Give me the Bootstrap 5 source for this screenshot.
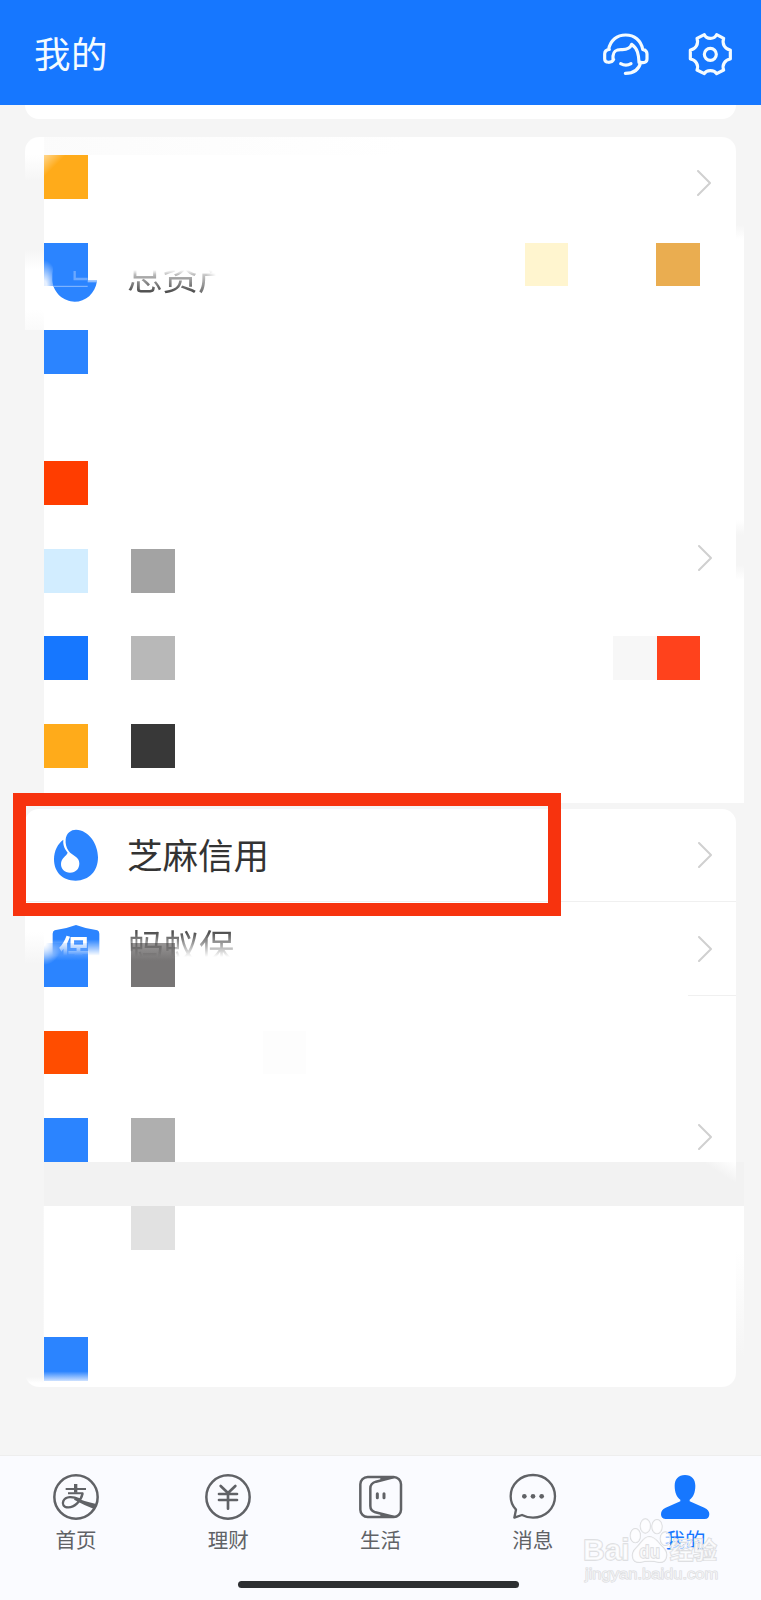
<!DOCTYPE html>
<html lang="zh-CN">
<head>
<meta charset="utf-8">
<meta name="viewport" content="width=device-width, initial-scale=1">
<title>我的</title>
<link href="https://cdn.jsdelivr.net/npm/bootstrap@5.3.0/dist/css/bootstrap.min.css" rel="stylesheet">
<style>
:root{--u:43.75px;--page:#f5f5f5;--blue:#2b84ff}
body{font-family:"Liberation Sans","Noto Sans CJK SC",sans-serif;background:var(--page);color:#333;width:761px;height:1600px;overflow:hidden}
svg{display:block;flex:none}
.topbar{height:105px;background:#1677ff;padding:4px 25px 0 34px;color:#f4fbff}
.topbar h1{font-size:36.5px;font-weight:400;line-height:52px;margin:2px 0 0;letter-spacing:.5px}
.topbar .tools{gap:35px}
.line{fill:none;stroke:currentColor;stroke-linecap:round;stroke-linejoin:round}
.peek{height:14px;margin:0 25px;background:#fff;border-radius:0 0 14px 14px}
.band{position:relative;background-color:#fff;background-repeat:no-repeat}
.band-a{height:88px;margin:18px 25px 0;border-radius:14px 14px 0 0;padding:18px 25px 0 18.75px;
 background-image:linear-gradient(#fff 18px,var(--page) 44px),linear-gradient(90deg,#fbfbfb,#fff 380px);background-size:19px 100%,100% 18px}
.band-b{height:105px;margin:0 17.25px 0 25px;padding:17.5px 43.75px 0 18.75px;
 background-image:linear-gradient(var(--page) 25px,#fff 45px 85px,#fafafa);background-size:19px 100%}
.band-b::after{content:"";position:absolute;right:0;top:0;width:8px;height:14px;background:linear-gradient(var(--page),#fff)}
.band-c{height:473px;margin:0 17.25px 0 43.75px;padding-right:32.5px}
.notch{position:absolute;right:0;top:190px;width:8px;height:60px;background:linear-gradient(transparent,var(--page) 15px 45px,transparent)}
.px{width:var(--u);height:var(--u);flex:none;background:var(--c)}
.mrow{height:var(--u);margin-bottom:var(--u)}
.chev{width:14px;height:26px;color:#d0d0d0}
.label{font-size:35.5px;line-height:50px;white-space:nowrap}
.ghost{position:absolute}
.shade-up{-webkit-mask-image:linear-gradient(transparent 34%,rgba(0,0,0,.35) 44%,rgba(0,0,0,.9) 80%);mask-image:linear-gradient(transparent 34%,rgba(0,0,0,.35) 44%,rgba(0,0,0,.9) 80%)}
.fade-end{-webkit-mask-image:linear-gradient(90deg,rgba(0,0,0,.8) 8px,transparent 18px);mask-image:linear-gradient(90deg,rgba(0,0,0,.8) 8px,transparent 18px);display:inline-block}
.shade-down{-webkit-mask-image:linear-gradient(rgba(0,0,0,.85) 20%,transparent 68%);mask-image:linear-gradient(rgba(0,0,0,.85) 20%,transparent 68%)}
.icon-down{-webkit-mask-image:linear-gradient(#000 30%,transparent 64%);mask-image:linear-gradient(#000 30%,transparent 64%)}
.band-d{z-index:2;height:93px;margin:6px 25.5px 0 25px;border-radius:14px 14px 0 0;padding:0 24px 0 26px;border-bottom:1px solid #f0f0f0}
.band-e{height:260px;margin:0 25.5px 0 25px;padding:41px 24px 0 18.75px;background-image:linear-gradient(#fff 30px,var(--page) 62px);background-size:19px 100%}
.rule{position:absolute;right:0;top:93px;width:48px;height:1px;background:#f0f0f0}
.frame{position:absolute;left:-12px;top:-16px;width:548px;height:123px;border:13.5px solid #f7330e}
.gapbar{height:44px;margin:0 17.25px 0 43.75px;background:#f2f2f2}
.gapbar i{display:block;margin-left:auto;margin-right:8px;width:30px;height:20px;background:linear-gradient(to top right,#f2f2f2 45%,#fff)}
.band-f{height:181px;margin:0 25.5px 0 25px;border-radius:0 0 14px 14px;padding:0 18.75px;background-image:linear-gradient(var(--page) 171px,#fff 177px);background-size:18.75px 100%}
.side{position:absolute;left:100%;top:0;width:8px;height:150px;background:linear-gradient(#fff 30%,var(--page))}
.tabs{height:145px;margin-top:68px;background:#fafbff;border-top:1px solid #eee;color:#606266;position:relative}
.tabs a{color:inherit;text-decoration:none;font-size:20.5px;line-height:30px;padding-top:16px}
.tabs a.active{color:#1677ff}
.tabs svg{margin-bottom:4px}
.homebar{position:absolute;left:237.5px;bottom:12px;width:281px;height:7px;border-radius:4px;background:#2d2f32}
.wm{position:absolute;left:581px;top:61px;pointer-events:none}
</style>
</head>
<body class="d-flex flex-column">
<header class="topbar d-flex align-items-center justify-content-between">
  <h1>我的</h1>
  <div class="tools d-flex">
    <svg width="50" height="50" viewBox="660 90 150 150"><g class="line" stroke-width="9.5"><path d="M683 148C688 121 708 105 734 105S780 121 785 148M698 178C692 190 671 190 671 177V162C671 153 676 149 685 148M696 181V168C698 150 709 148 724 149C739 149 748 144 752 133C770 145 773 164 774 187M785 148C794 150 798 154 798 162V176C798 187 790 189 779 187C774 208 758 220 733 220M719 191Q735 200 750 191"/></g></svg>
    <svg width="50" height="50" viewBox="915 90 150 150"><g class="line" stroke-width="9.5"><path d="M970 104C976 119 1000 119 1007 104L1028 115C1022 132 1032 148 1048 150V177C1032 179 1022 195 1028 210L1007 221C1000 209 976 209 970 221L948 210C954 195 944 179 928 177V150C944 148 954 132 948 115Z"/><circle cx="988" cy="163" r="18"/></g></svg>
  </div>
</header>
<main>
  <div class="peek"></div>

  <section class="band band-a d-flex justify-content-between align-items-start">
    <div class="px" style="--c:linear-gradient(135deg,#ffd78f,#ffab1a 25%)"></div>
    <svg class="chev" style="margin-top:15px" viewBox="0 0 14 26"><path class="line" stroke-width="2" d="M1 1L13 13L1 25"/></svg>
  </section>
  <section class="band band-b d-flex align-items-start">
    <div class="px" style="--c:radial-gradient(ellipse 14px 26px at 0 100%,#e6f0ff 20%,#2b84ff)"></div>
    <svg class="ghost" style="left:24px;top:32px" width="50" height="48" viewBox="145 770 150 144"><path fill="#2b84ff" d="M158 800Q154 822 155 840C158 880 190 904 222 904S284 880 289 841H261V800Z"/><path stroke="#6ba8ff" stroke-width="7" fill="none" d="M222 812V836H261"/><path stroke="#8fbdff" stroke-width="3" d="M158 858H261"/><path stroke="#8fbdff" stroke-width="6" d="M261 843H289"/></svg>
    <span class="label ghost shade-up" style="left:102px;top:28px">总资<span class="fade-end">产</span></span>
    <div class="px ms-auto" style="--c:#fff5cf"></div>
    <div class="px" style="--c:#eaad50;margin-left:88px"></div>
  </section>
  <section class="band band-c">
    <i class="notch"></i>
    <div class="mrow d-flex" style="margin-bottom:87.5px"><div class="px" style="--c:#2b84ff"></div></div>
    <div class="mrow d-flex"><div class="px" style="--c:#ff3d00"></div></div>
    <div class="mrow d-flex"><div class="px" style="--c:#d2edff"></div><div class="px" style="--c:#a3a3a3;margin-left:43.75px"></div>
      <svg class="chev ms-auto" style="margin-top:-4px;margin-right:-.5px" viewBox="0 0 14 26"><path class="line" stroke-width="2" d="M1 1L13 13L1 25"/></svg></div>
    <div class="mrow d-flex"><div class="px" style="--c:#1677ff"></div><div class="px" style="--c:#b8b8b8;margin-left:43.75px"></div>
      <div class="px ms-auto" style="--c:#f7f7f7"></div><div class="px" style="--c:#ff421c;margin-right:11px"></div></div>
    <div class="mrow d-flex"><div class="px" style="--c:#ffab1a"></div><div class="px" style="--c:#383838;margin-left:43.75px"></div></div>
  </section>

  <section class="band band-d d-flex align-items-center">
    <svg width="50" height="54" viewBox="153 175 150 162"><path fill="#2b84ff" d="M228 180C267 181 294 224 294 263C294 304 268 333 227 333C187 333 162 307 162 269C162 243 174 221 190 210C188 228 196 240 203 249C199 260 183 264 183 283C183 299 194 309 210 309C228 309 238 298 238 281C238 261 217 259 206 244C198 233 196 222 197 209C199 190 213 180 228 180Z"/></svg>
    <span class="label" style="margin-left:26px;padding-top:4px">芝麻信用</span>
    <svg class="chev ms-auto" viewBox="0 0 14 26"><path class="line" stroke-width="2" d="M1 1L13 13L1 25"/></svg>
    <div class="frame"></div>
  </section>
  <section class="band band-e">
    <i class="rule"></i>
    <div class="mrow d-flex"><div class="px" style="--c:radial-gradient(ellipse 18px 22px at 0 0,#fff 10%,transparent),linear-gradient(#8fbdff,#2b84ff 40%)"></div><div class="px" style="--c:linear-gradient(#979595,#777575 40%);margin-left:43.75px"></div>
      <svg class="chev ms-auto" style="margin-top:-7px" viewBox="0 0 14 26"><path class="line" stroke-width="2" d="M1 1L13 13L1 25"/></svg></div>
    <div class="ghost icon-down" style="left:27px;top:23px"><svg width="48" height="48" viewBox="156 464 144 144"><path fill="#2b84ff" d="M228 464Q260 476 292 480Q298 482 298 490V560Q290 590 228 608Q166 590 158 560V490Q158 482 164 480Q196 476 228 464Z"/><text x="176" y="574" font-size="92" font-weight="700" fill="#fff">保</text></svg></div>
    <span class="label ghost shade-down" style="left:103px;top:21px">蚂蚁保</span>
    <div class="mrow d-flex"><div class="px" style="--c:#ff4d00"></div><div class="px" style="--c:#fdfdfd;margin-left:175px"></div></div>
    <div class="mrow d-flex mb-0"><div class="px" style="--c:#2b84ff"></div><div class="px" style="--c:#afafaf;margin-left:43.75px"></div>
      <svg class="chev ms-auto" style="margin-top:6px" viewBox="0 0 14 26"><path class="line" stroke-width="2" d="M1 1L13 13L1 25"/></svg></div>
  </section>
  <div class="gapbar"><i></i></div>
  <section class="band band-f">
    <i class="side"></i>
    <div class="mrow" style="margin-bottom:87.5px"><div class="px" style="--c:#e1e1e1;margin-left:87.5px"></div></div>
    <div class="px" style="--c:linear-gradient(#2b84ff 78%,#cfe2ff)"></div>
  </section>
</main>

<nav class="tabs">
  <div class="d-flex">
    <a class="d-flex flex-column align-items-center flex-fill w-25" href="#"><svg width="50" height="50" viewBox="153 96 150 150"><circle class="line" cx="228" cy="171" r="65" stroke-width="7.5"/><g class="line" style="stroke-linecap:butt"><path stroke-width="10" d="M227 132V158"/><path stroke-width="6" d="M197 147H258M204 160H250"/><path stroke-width="7" d="M248 160C243 184 223 202 205 202C190 202 186 192 190 183C197 168 218 169 238 178"/></g><path fill="currentColor" d="M226 172Q250 184 289 192L284 208Q252 195 222 179Z"/></svg>首页</a>
    <a class="d-flex flex-column align-items-center flex-fill w-25" href="#"><svg width="50" height="50" viewBox="610 96 150 150"><circle class="line" cx="685" cy="171" r="65" stroke-width="7.5"/><path class="line" stroke-width="8" d="M663 138L685 159L707 138M658 162H712M658 180H712M685 160V206"/></svg>理财</a>
    <a class="d-flex flex-column align-items-center flex-fill w-25" href="#"><svg width="50" height="50" viewBox="1068 96 150 150"><rect class="line" x="1081" y="111" width="122" height="120" rx="22" stroke-width="7.5"/><path class="line" stroke-width="7.5" d="M1180 112L1128 125Q1111 130 1111 145V198Q1111 212 1126 217L1180 230"/><path fill="currentColor" d="M1140 109H1185L1142 122ZM1140 233H1185L1142 220Z"/><path class="line" stroke-width="9" d="M1132 161V173M1152 161V173"/></svg>生活</a>
    <a class="d-flex flex-column align-items-center flex-fill w-25" href="#"><svg width="50" height="50" viewBox="382 96 150 150"><path class="line" stroke-width="7" d="M406 209C395 198 390 185 390 169C390 132 420 105 457 105S523 132 523 169S493 233 457 233Q440 233 424 225L401 233Z"/><g fill="currentColor"><circle cx="431" cy="169" r="7"/><circle cx="457" cy="169" r="7"/><circle cx="483" cy="169" r="7"/></g></svg>消息</a>
    <a class="d-flex flex-column align-items-center flex-fill w-25 active" href="#"><svg width="50" height="50" viewBox="837 96 150 150"><path fill="currentColor" d="M912 105C932 105 943 118 943 137C943 158 936 172 926 179V184L970 203C980 208 985 214 985 222C985 231 980 237 971 237H853C844 237 840 231 840 223C840 214 844 208 854 203L898 184V179C888 172 881 158 881 137C881 118 892 105 912 105Z"/></svg>我的</a>
  </div>
  <div class="homebar"></div>
  <svg class="wm" width="142" height="68" viewBox="600 230 426 204" font-family="Liberation Sans, Noto Sans CJK SC, sans-serif"><g fill="#fff" fill-opacity=".6" stroke="#d9dadd" stroke-width="4" paint-order="stroke"><ellipse cx="763" cy="286" rx="15" ry="21"/><ellipse cx="793" cy="257" rx="15" ry="21"/><ellipse cx="828" cy="259" rx="15" ry="21"/><ellipse cx="853" cy="295" rx="15" ry="20"/><path d="M805 289C824 289 832 309 847 322C864 339 858 367 835 366C815 361 795 361 777 366C751 367 748 339 766 322C781 309 787 289 805 289Z"/><text x="606" y="360" font-size="90" font-weight="700" textLength="140" lengthAdjust="spacingAndGlyphs">Bai</text><text x="775" y="352" font-size="54" font-weight="700" textLength="62" lengthAdjust="spacingAndGlyphs">du</text><text x="866" y="355" font-size="71" font-weight="700">经验</text><text x="612" y="415" font-size="43" stroke-width="3" textLength="400" lengthAdjust="spacingAndGlyphs">jingyan.baidu.com</text></g></svg>
</nav>
<script src="https://cdn.jsdelivr.net/npm/bootstrap@5.3.0/dist/js/bootstrap.bundle.min.js"></script>
</body>
</html>
